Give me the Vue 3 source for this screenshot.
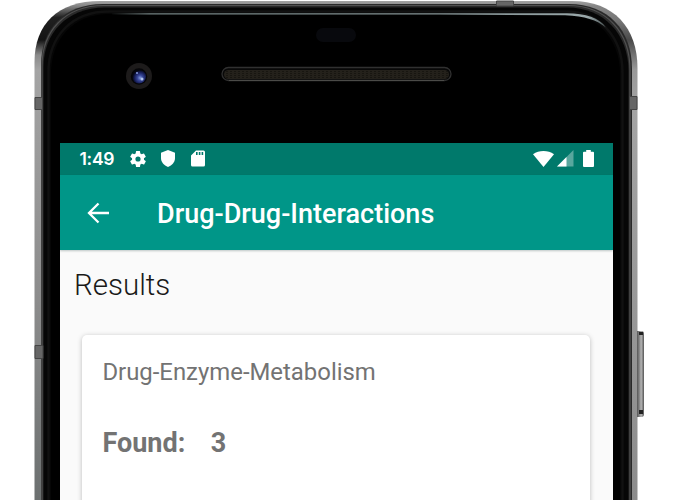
<script setup>
const title = 'Drug-Drug-Interactions'
const results = [{ name: 'Drug-Enzyme-Metabolism', found: 3 }]
</script>

<template>
  <div class="stage">
    <svg class="device" width="680" height="500" viewBox="0 0 680 500" aria-hidden="true">
      <defs>
        <linearGradient id="rim" x1="0" y1="0" x2="0" y2="500" gradientUnits="userSpaceOnUse">
          <stop offset="0" stop-color="#aaa" />
          <stop offset=".012" stop-color="#858585" />
          <stop offset=".035" stop-color="#202020" />
          <stop offset=".08" stop-color="#141414" />
          <stop offset=".11" stop-color="#8a8a8a" />
          <stop offset=".14" stop-color="#a4a4a4" />
          <stop offset=".6" stop-color="#8c8c8c" />
          <stop offset="1" stop-color="#6c7070" />
        </linearGradient>
        <linearGradient id="rimRight" x1="0" y1="0" x2="0" y2="500" gradientUnits="userSpaceOnUse">
          <stop offset="0" stop-color="#aaa" />
          <stop offset=".012" stop-color="#858585" />
          <stop offset=".04" stop-color="#777" />
          <stop offset=".08" stop-color="#4a4a4a" />
          <stop offset=".14" stop-color="#999" />
          <stop offset=".22" stop-color="#a4a4a4" />
          <stop offset="1" stop-color="#8c8c8c" />
        </linearGradient>
        <linearGradient id="glint" x1="110" y1="0" x2="608" y2="0" gradientUnits="userSpaceOnUse">
          <stop offset="0" stop-color="#718080" stop-opacity="0" />
          <stop offset=".08" stop-color="#718080" />
          <stop offset=".8" stop-color="#8b999b" />
          <stop offset=".96" stop-color="#9aa8aa" />
          <stop offset="1" stop-color="#414a4b" />
        </linearGradient>
        <linearGradient id="button" x1="637" y1="0" x2="644" y2="0" gradientUnits="userSpaceOnUse">
          <stop offset="0" stop-color="#555" />
          <stop offset=".35" stop-color="#888" />
          <stop offset=".6" stop-color="#b5b5b5" />
          <stop offset="1" stop-color="#555" />
        </linearGradient>
        <radialGradient id="lens" cx=".58" cy=".6" r=".55">
          <stop offset="0" stop-color="#8298d8" />
          <stop offset=".35" stop-color="#38479a" />
          <stop offset=".75" stop-color="#141b52" />
          <stop offset="1" stop-color="#05060e" />
        </radialGradient>
        <pattern id="mesh" width="4" height="2" patternUnits="userSpaceOnUse">
          <rect width="4" height="2" fill="#181611" />
          <path d="M1 0v2M3 0v1" stroke="#302c25" stroke-width="1" />
        </pattern>
      </defs>
      <path d="M34.500 510V62C34.500 24 58 1 100 1H340V510Z" fill="url(#rim)" />
      <path d="M340 1H572C614 1 637.500 28 637.500 68V510H340Z" fill="url(#rimRight)" />
      <path d="M41 510V65C41 30 63 4 103 4H569C608 4 632 30 632 69V510Z" fill="#292929" />
      <path d="M42 510V66C42 32 64 5.500 104 5.500H568C606 5.500 630 32 630 70V510" fill="none" stroke="#505050" stroke-width="1.200" />
      <path d="M43.500 510V67C43.500 34 66 7.500 105 7.500H567C604 7.500 628.500 34 628.500 71V510Z" fill="#060606" />
      <path d="M48.500 510V72C48.500 38 70 11.500 109 11.500H565C599 11.500 622.500 36 622.500 73V510" fill="none" stroke="#111" stroke-width="2.500" />
      <path d="M51 510V74C51 40 72 14 110 14H565C596 14 620 38 620 74V510Z" fill="#000" />
      <path d="M112 13.300H567C586 13.300 599 18 606 27.500C597 20 585 16 565 15.200L440 14.500H112Z" fill="url(#glint)" />
      <g fill="#666" stroke="#454545" stroke-width="1">
        <path d="M35 97.500H42.500V109.500H35Z" />
        <path d="M35 345.500H43V358.500H35Z" />
        <path d="M629.500 96.500H637V109.500H629.500Z" />
        <path d="M496.500 1H513.500V6H496.500Z" />
      </g>
      <path d="M637 331H641.500Q644 331 644 334V414Q644 417 641.500 417H637Z" fill="url(#button)" />
      <path d="M639 332h4v3h-4zM639 410h4v4h-4z" fill="#222" />
      <rect x="316" y="28" width="40" height="14" rx="7" fill="#08090d" />
      <rect x="222" y="67.500" width="229" height="13" rx="6.500" fill="#080808" stroke="#303030" stroke-width="1.300" />
      <rect x="224" y="70" width="225" height="9" rx="4.500" fill="url(#mesh)" />
      <path d="M229 80.500H444" stroke="#4b4b48" />
      <circle cx="139" cy="76" r="13" fill="#1d1b1b" />
      <circle cx="139" cy="76.500" r="8.200" fill="#050507" />
      <circle cx="139" cy="76.500" r="7" fill="url(#lens)" />
      <circle cx="137" cy="73" r="1" fill="#899be0" />
      <circle cx="142" cy="79" r="1.500" fill="#b0c4ee" />
    </svg>

    <main class="screen">
      <div class="status">
        <span class="time">1:49</span>
        <svg class="gear" width="20" height="20" viewBox="0 0 24 24">
          <path d="M19.140 12.940c.04-.3.060-.61.060-.94s-.02-.64-.07-.94l2.030-1.580a.49.49 0 0 0 .12-.61l-1.920-3.320a.49.49 0 0 0-.59-.22l-2.390.96a7 7 0 0 0-1.620-.94l-.36-2.540a.48.48 0 0 0-.48-.41h-3.840a.47.47 0 0 0-.47.41l-.36 2.540a7.300 7.300 0 0 0-1.620.94l-2.390-.96a.47.47 0 0 0-.59.22L2.740 8.870a.47.47 0 0 0 .12.61l2.030 1.580a6 6 0 0 0 0 1.880l-2.030 1.580a.49.49 0 0 0-.12.61l1.920 3.320c.12.22.37.29.59.22l2.390-.96c.5.38 1.030.7 1.620.94l.36 2.540c.05.24.24.41.48.41h3.840c.24 0 .44-.17.47-.41l.36-2.540a7.300 7.300 0 0 0 1.620-.94l2.390.96c.22.08.47 0 .59-.22l1.920-3.320a.47.47 0 0 0-.12-.61zM12 15.100a3.100 3.100 0 1 1 0-6.200 3.100 3.100 0 0 1 0 6.200z" />
        </svg>
        <svg class="shield" width="14" height="17" viewBox="0 0 14 17">
          <path d="M7 0L14 2.700V8C14 12 11 15.500 7 17C3 15.500 0 12 0 8V2.700Z" />
        </svg>
        <svg class="sd" width="14" height="17" viewBox="0 0 14 17">
          <path fill-rule="evenodd" d="M5 .5H12.500Q14 .5 14 2V15Q14 16.500 12.500 16.500H1.500Q0 16.500 0 15V5.500ZM5 2V5H6.600V2ZM7.800 2V5H9.400V2ZM10.600 2V5H12.200V2Z" />
        </svg>
        <svg class="wifi" width="21" height="16" viewBox="0 0 21 16">
          <path d="M0 3.200C6-1 15-1 21 3.200L10.500 16Z" />
        </svg>
        <svg class="signal" width="17" height="17" viewBox="0 0 17 17">
          <path d="M16.500 0V16.500H0Z" opacity=".35" />
          <path d="M9.500 7V16.500H0Z" />
        </svg>
        <svg class="battery" width="11" height="17" viewBox="0 0 11 17">
          <path d="M3.200 0H7.800V1.700H10Q11 1.700 11 2.700V16Q11 17 10 17H1Q0 17 0 16V2.700Q0 1.700 1 1.700H3.200Z" />
        </svg>
      </div>
      <header class="toolbar">
        <svg class="back" width="22" height="22" viewBox="0 0 22 22">
          <path d="M11.500 1.500L2 11L11.500 20.500M2 11H22" fill="none" stroke="#fff" stroke-width="2.300" />
        </svg>
        <h1>{{ title }}</h1>
      </header>
      <section class="content">
        <h2>Results</h2>
        <article v-for="result in results" :key="result.name" class="card">
          <p class="name">{{ result.name }}</p>
          <p class="found"><span>Found:</span><span>{{ result.found }}</span></p>
        </article>
      </section>
    </main>
  </div>
</template>

<style>
body { background: #fff; overflow: hidden; }
</style>

<style scoped>
.stage {
  position: relative;
  box-sizing: border-box;
  width: 680px;
  height: 500px;
  padding: 142.500px 67.500px 0 60px;
  overflow: hidden;
  font-family: Roboto, sans-serif;
}
.device { position: absolute; inset: 0; }
.screen {
  position: relative;
  height: 358px;
  background: #fafafa;
  overflow: hidden;
  display: flex;
  flex-direction: column;
}
.status {
  height: 32.500px;
  flex: none;
  box-sizing: border-box;
  padding: 0 18.500px 0 19.500px;
  display: flex;
  align-items: center;
  background: #00796b;
}
.status svg { fill: #fff; flex: none; }
.time {
  width: 48.500px;
  color: #fff;
  font: 600 17.500px/32px Inter, sans-serif;
  letter-spacing: -.3px;
}
.shield { margin-left: 13px; }
.sd { margin-left: 16px; }
.wifi { margin-left: auto; }
.signal { margin-left: 3px; }
.battery { margin-left: 9px; }
.toolbar {
  height: 75px;
  flex: none;
  box-sizing: border-box;
  padding-left: 27px;
  display: flex;
  align-items: center;
  background: #009688;
  box-shadow: 0 1px 2px rgba(0, 40, 36, .25);
  z-index: 1;
}
h1, h2, p { margin: 0; }
h1 {
  margin-left: 48px;
  padding-top: 3px;
  color: #fff;
  font-size: 27px;
  font-weight: 500;
  line-height: 32px;
  white-space: nowrap;
}
.content { flex: 1; padding: 16px 22.500px 0 22px; }
h2 {
  margin-left: -8px;
  color: #191919;
  font-size: 29.500px;
  font-weight: 300;
  line-height: 38px;
}
.card {
  box-sizing: border-box;
  height: 200px;
  margin-top: 31px;
  padding: 21px 20.400px;
  border-radius: 5px;
  background: #fff;
  box-shadow: 0 1px 5px rgba(0, 0, 0, .25);
  color: #737373;
}
.name { font-size: 23.900px; line-height: 32px; white-space: nowrap; }
.found {
  display: flex;
  gap: 25.500px;
  margin-top: 38.500px;
  font-size: 27px;
  font-weight: 700;
  line-height: 32px;
}
</style>
